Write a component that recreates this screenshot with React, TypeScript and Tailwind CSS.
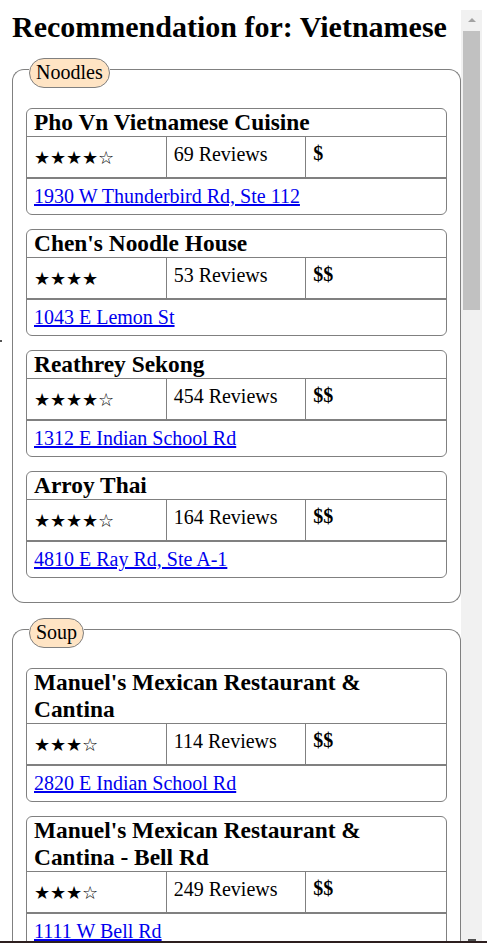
import React from "react";

type R = { name: string; stars: string; reviews: number; price: string; addr: string };

const noodles: R[] = [
  { name: "Pho Vn Vietnamese Cuisine", stars: "★★★★☆", reviews: 69, price: "$", addr: "1930 W Thunderbird Rd, Ste 112" },
  { name: "Chen's Noodle House", stars: "★★★★", reviews: 53, price: "$$", addr: "1043 E Lemon St" },
  { name: "Reathrey Sekong", stars: "★★★★☆", reviews: 454, price: "$$", addr: "1312 E Indian School Rd" },
  { name: "Arroy Thai", stars: "★★★★☆", reviews: 164, price: "$$", addr: "4810 E Ray Rd, Ste A-1" },
];

const soup: R[] = [
  { name: "Manuel's Mexican Restaurant & Cantina", stars: "★★★☆", reviews: 114, price: "$$", addr: "2820 E Indian School Rd" },
  { name: "Manuel's Mexican Restaurant & Cantina - Bell Rd", stars: "★★★☆", reviews: 249, price: "$$", addr: "1111 W Bell Rd" },
];

function Card({ r }: { r: R }) {
  return (
    <div className="w-[421px] shrink-0 border border-[#808080] rounded-[6px] overflow-hidden">
      <h3 className="px-[7px] text-[23.4px] font-bold leading-[27px] border-b border-[#808080]">{r.name}</h3>
      <div className="grid grid-cols-3 h-[41px] border-b border-[#808080]">
        <div className="border-r border-[#808080] pl-[7px] pt-[10px] text-[18px] leading-[23px] whitespace-nowrap">{r.stars}</div>
        <div className="border-r border-[#808080] pl-[7px] pt-[6px] leading-[23px] whitespace-nowrap">{r.reviews} Reviews</div>
        <div className="pl-[7px] pt-[5px] leading-[23px] font-bold">{r.price}</div>
      </div>
      <div className="border-t border-[#808080] h-[36px] pl-[7px] pt-[6px] leading-[23px]">
        <a href="#" className="text-[#0000ee] underline">{r.addr}</a>
      </div>
    </div>
  );
}

function Group({ title, items, className }: { title: string; items: R[]; className?: string }) {
  return (
    <div className={"ml-[12px] w-[449px] " + (className ?? "")}>
      <div className="flex items-start">
        <div className="w-[17px] h-[19px] mt-[11px] border-l border-t border-[#808080] rounded-tl-[12px]" />
        <div className="border border-[#808080] bg-[#ffe4c4] rounded-full px-[6px] pt-[2px] pb-[3px] leading-[23px]">{title}</div>
        <div className="flex-1 h-[19px] mt-[11px] border-t border-r border-[#808080] rounded-tr-[12px]" />
      </div>
      <div className="border-l border-r border-b border-[#808080] rounded-b-[12px] px-[13px] pt-[20px] pb-[24px] flex flex-col gap-[14px]">
        {items.map((r) => (
          <Card key={r.name} r={r} />
        ))}
      </div>
    </div>
  );
}

export default function App() {
  return (
    <div className="w-[487px] h-[943px] bg-white flex flex-col overflow-hidden text-black text-[20px] font-['Liberation_Serif','Times_New_Roman',serif]">
      <div className="h-[10px] shrink-0" />
      <div className="flex h-[931px] shrink-0">
        <div className="w-[461px] overflow-hidden relative">
          <h2 className="pl-[12px] text-[30px] font-bold leading-[34px]">Recommendation for: Vietnamese</h2>
          <Group title="Noodles" items={noodles} className="mt-[14px]" />
          <Group title="Soup" items={soup} className="mt-[15px]" />
          <div className="absolute left-0 top-[330px] w-[2px] h-[2px] bg-[#555]" />
        </div>
        <div className="w-[21px] bg-[#f1f1f1] flex flex-col items-center">
          <div className="h-[21px] w-full flex items-center justify-center">
            <svg width="8" height="5" viewBox="0 0 8 5">
              <polygon points="4,0 8,4 0,4" fill="#a3a3a3" />
            </svg>
          </div>
          <div className="w-[17px] h-[279px] bg-[#c1c1c1]" />
          <div className="flex-1" />
          <svg width="8" height="2" viewBox="0 0 8 2">
            <rect x="0" y="0" width="8" height="2" fill="#505050" />
          </svg>
        </div>
        <div className="flex-1" />
      </div>
      <div className="h-[2px] bg-[#2d1f1f] shrink-0" />
    </div>
  );
}
